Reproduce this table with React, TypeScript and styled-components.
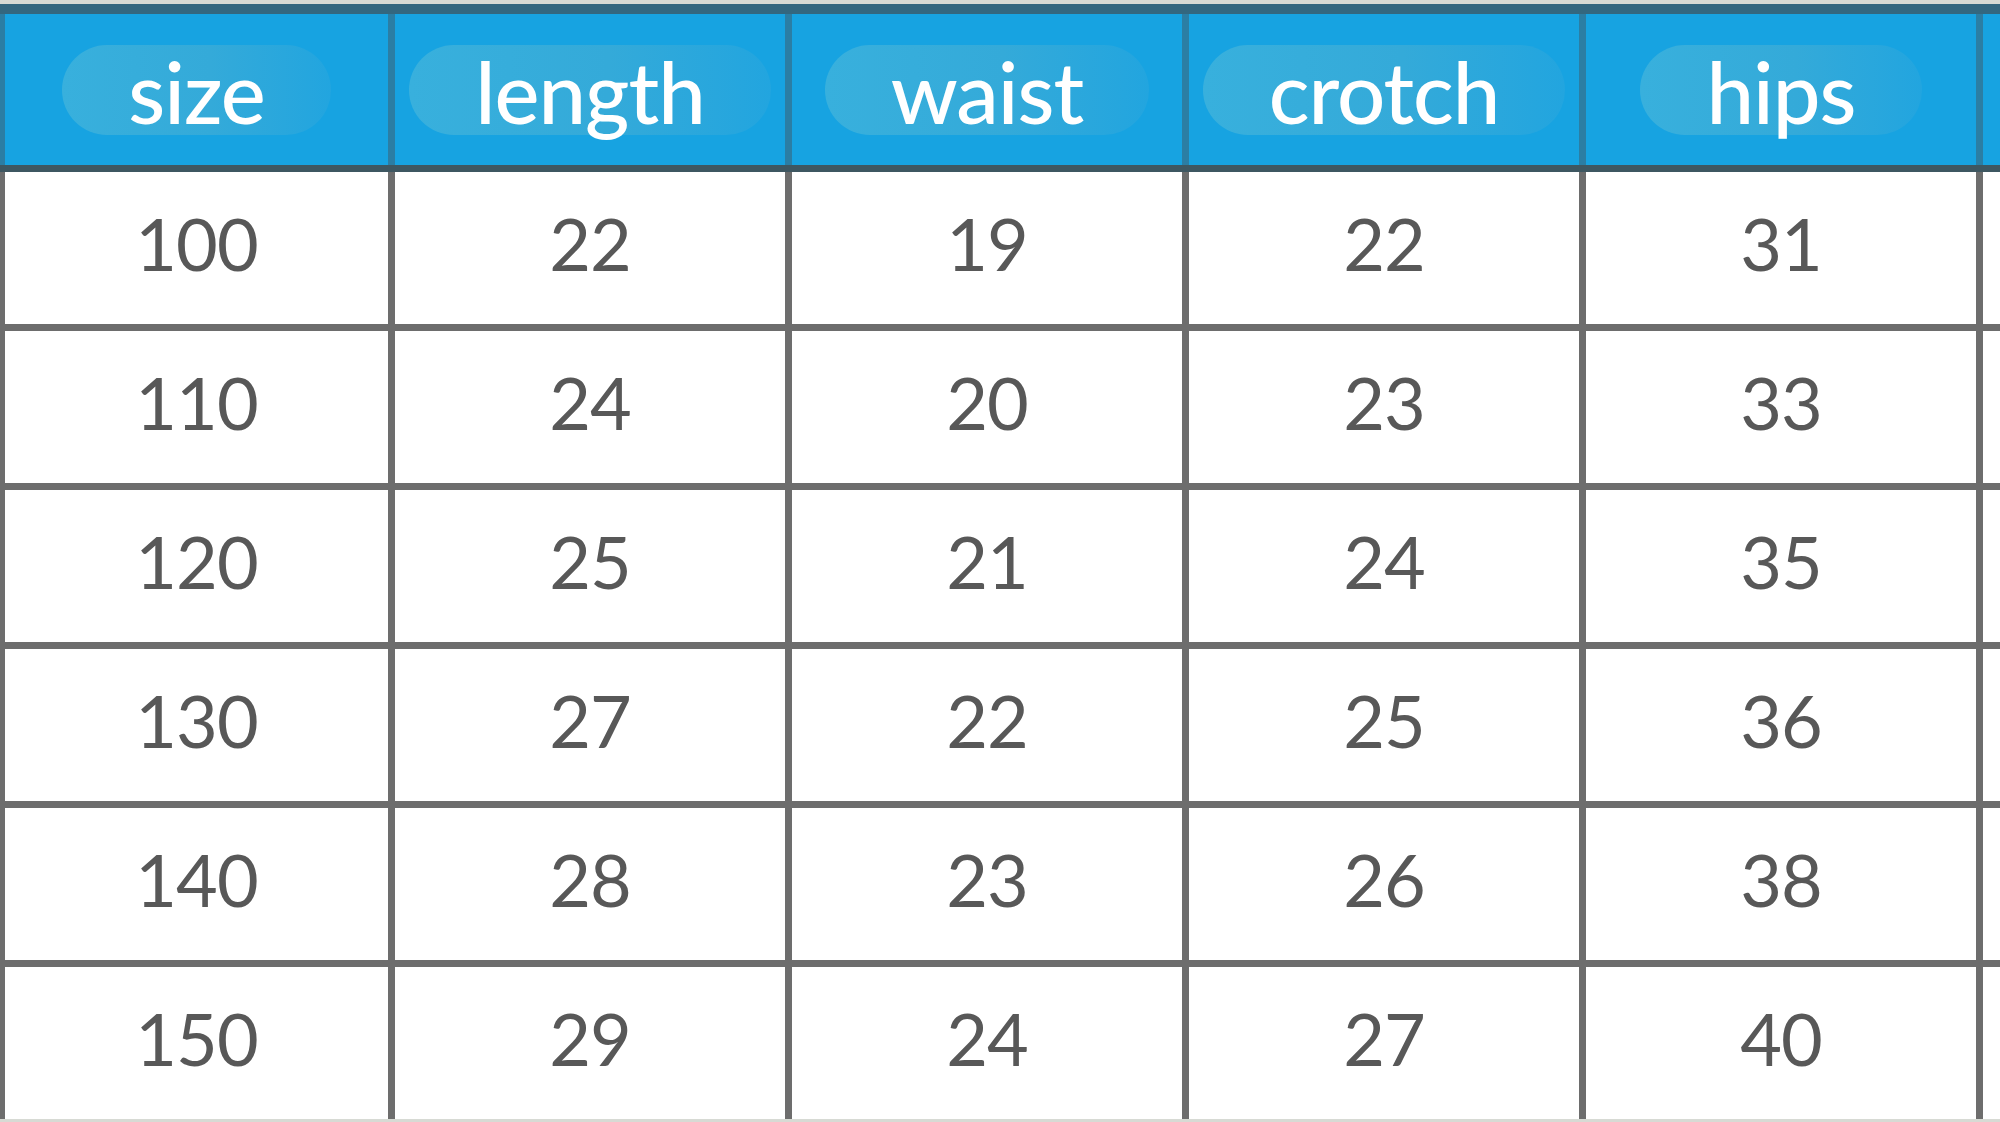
import React from 'react';
import styled, { createGlobalStyle } from 'styled-components';

const GlobalStyle = createGlobalStyle`
  html, body {
    margin: 0;
    padding: 0;
    overflow: hidden;
    background: #d7dad4;
  }
  body {
    font-family: Lato, "Open Sans", sans-serif;
  }
`;

const Page = styled.div`
  width: 2000px;
  height: 1122px;
  box-sizing: border-box;
  padding-top: 4px;
  overflow: hidden;
  background: #d7dad4;
`;

const Table = styled.div`
  display: flex;
  flex-direction: column;
  width: max-content;
`;

const HeaderRow = styled.div`
  display: grid;
  grid-template-columns: 383px repeat(5, 390px);
  column-gap: 7px;
  padding-left: 5px;
  background: #2b7ea4;
  border-top: 10px solid #33677f;
  border-bottom: 7px solid #3e5761;
`;

const HeaderCell = styled.div`
  height: 151px;
  display: flex;
  align-items: center;
  justify-content: center;
  background: #17a3e1;
`;

const Label = styled.span`
  display: inline-block;
  height: 90px;
  line-height: 92px;
  padding: 0 66px;
  border-radius: 45px;
  background: linear-gradient(90deg, #38b0dd 0%, #34aad9 55%, #22a5df 100%);
  color: #ffffff;
  font-size: 85px;
  font-weight: 500;
  letter-spacing: -1px;
`;

const Body = styled.div`
  display: grid;
  grid-template-columns: 383px repeat(5, 390px);
  grid-auto-rows: 152px;
  gap: 7px;
  padding-left: 5px;
  background: #6d6d6d;
`;

const Cell = styled.div`
  display: flex;
  align-items: center;
  justify-content: center;
  padding-bottom: 10px;
  background: #ffffff;
  color: #585858;
  font-size: 72px;
  font-weight: 400;
  letter-spacing: -1px;
`;

const columns = ['size', 'length', 'waist', 'crotch', 'hips'];

const rows: number[][] = [
  [100, 22, 19, 22, 31],
  [110, 24, 20, 23, 33],
  [120, 25, 21, 24, 35],
  [130, 27, 22, 25, 36],
  [140, 28, 23, 26, 38],
  [150, 29, 24, 27, 40],
];

const App: React.FC = () => {
  return (
    <Page>
      <GlobalStyle />
      <Table>
        <HeaderRow>
          {columns.map((name) => (
            <HeaderCell key={name}>
              <Label>{name}</Label>
            </HeaderCell>
          ))}
          {/* next column is cut off at the right edge */}
          <HeaderCell />
        </HeaderRow>
        <Body>
          {rows.map((row, i) => (
            <React.Fragment key={i}>
              {row.map((value, j) => (
                <Cell key={j}>{value}</Cell>
              ))}
              <Cell />
            </React.Fragment>
          ))}
        </Body>
      </Table>
    </Page>
  );
};

export default App;
